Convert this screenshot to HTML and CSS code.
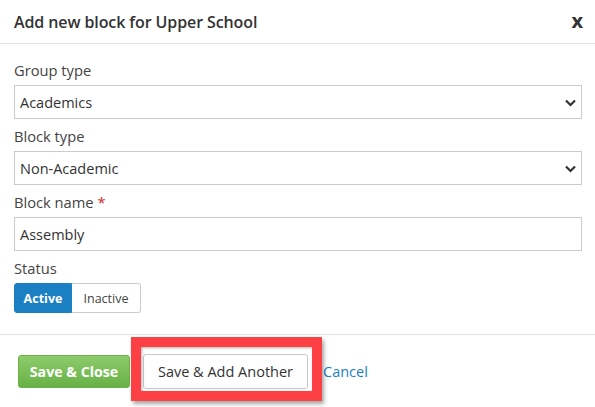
FILE: index.html
```html
<!DOCTYPE html>
<html>
<head>
<meta charset="utf-8">
<link rel="stylesheet" href="styles.css">
</head>
<body>
<div class="modal">
  <div class="modal-header">
    <h1 class="title">Add new block for Upper School</h1>
    <span class="close">x</span>
  </div>
  <div class="modal-body">
    <div class="field">
      <label class="label">Group type</label>
      <div class="select">Academics
        <svg class="chev" width="11" height="8" viewBox="0 0 11 8"><path d="M1 1.5 L5.5 6 L10 1.5" fill="none" stroke="#333" stroke-width="2.2"/></svg>
      </div>
    </div>
    <div class="field">
      <label class="label">Block type</label>
      <div class="select">Non-Academic
        <svg class="chev" width="11" height="8" viewBox="0 0 11 8"><path d="M1 1.5 L5.5 6 L10 1.5" fill="none" stroke="#333" stroke-width="2.2"/></svg>
      </div>
    </div>
    <div class="field">
      <label class="label">Block name <span class="req">*</span></label>
      <div class="input">Assembly</div>
    </div>
    <div class="field">
      <label class="label">Status</label>
      <div class="toggle">
        <span class="seg active">Active</span>
        <span class="seg">Inactive</span>
      </div>
    </div>
  </div>
  <div class="modal-footer">
    <button class="btn btn-green">Save &amp; Close</button>
    <div class="highlight-wrap">
      <button class="btn btn-default">Save &amp; Add Another</button>
      <div class="highlight"></div>
    </div>
    <a class="link" href="#">Cancel</a>
  </div>
</div>
</body>
</html>
```

FILE: styles.css
```css
* { box-sizing: border-box; }
html, body { margin: 0; padding: 0; background: #fff; }
body {
  font-family: "Open Sans", "Liberation Sans", sans-serif;
  color: #333;
  width: 595px;
  height: 407px;
  overflow: hidden;
}
.modal { width: 595px; }
.modal-header {
  height: 44px;
  border-bottom: 1px solid #e3e3e3;
  display: flex;
  align-items: center;
  justify-content: space-between;
  padding: 0 12px 0 14px;
}
.title {
  margin: 0;
  font-size: 16px;
  font-weight: 600;
  color: #333;
  letter-spacing: -0.1px;
}
.close {
  font-size: 20px;
  font-weight: 700;
  color: #333;
  line-height: 1;
  margin-top: -1px;
}
.modal-body {
  padding: 16px 13px 21px 14px;
  display: flex;
  flex-direction: column;
  gap: 7px;
}
.field { display: flex; flex-direction: column; }
.label {
  font-size: 14.7px;
  line-height: 20px;
  color: #444;
  margin-bottom: 5px;
}
.req { color: #d9262c; }
.select, .input {
  position: relative;
  height: 34px;
  border: 1px solid #ccc;
  font-size: 14.5px;
  color: #333;
  padding: 0 5px;
  display: flex;
  align-items: center;
}
.chev { position: absolute; right: 5px; top: 13px; }
.toggle { display: flex; }
.seg {
  height: 30px;
  display: flex;
  align-items: center;
  justify-content: center;
  font-size: 12.5px;
  border: 1px solid #ccc;
  color: #444;
  padding: 0 10px;
}
.seg.active {
  background: #1b7fc4;
  border-color: #1b7fc4;
  color: #fff;
  font-weight: 700;
  width: 58px;
  border-radius: 3px 0 0 3px;
}
.seg:last-child { border-left: none; border-radius: 0 3px 3px 0; width: 69px; }
.modal-footer {
  border-top: 1px solid #e3e3e3;
  display: flex;
  align-items: center;
  padding: 19px 0 0 18px;
}
.btn {
  font-family: inherit;
  font-size: 14px;
  border-radius: 3px;
  margin: 0;
  cursor: pointer;
}
.btn-green {
  height: 33px;
  width: 112px;
  background: linear-gradient(#8dcb6b, #68b146);
  border: 1px solid #6bb24a;
  color: #fff;
  font-weight: 700;
  font-size: 14.2px;
}
.highlight-wrap { position: relative; margin-left: 13px; }
.btn-default {
  height: 35px;
  width: 165px;
  background: #fff;
  border: 1px solid #c8c8c8;
  color: #333;
  display: block;
  font-size: 14.5px;
}
.highlight {
  position: absolute;
  left: -12px;
  top: -17px;
  right: -14px;
  bottom: -12px;
  border: 10px solid #fc4044;
  box-shadow: 2px 3px 4px rgba(0,0,0,0.35), inset 1px 1px 3px rgba(0,0,0,0.3);
  pointer-events: none;
}
.link {
  margin-left: 15px;
  color: #1b7fc4;
  font-size: 14.5px;
  text-decoration: none;
}
```
